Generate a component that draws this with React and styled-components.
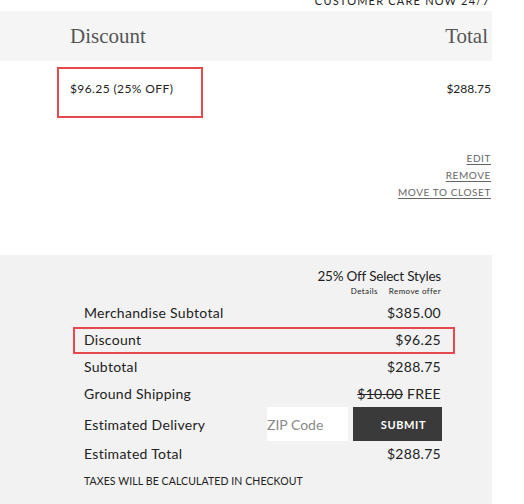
import React from "react";
import styled, { createGlobalStyle } from "styled-components";

const Global = createGlobalStyle`
  html, body { margin: 0; padding: 0; background: #fff; }
  body { font-family: Lato, "Liberation Sans", sans-serif; color: #222; overflow: hidden; }
  * { box-sizing: border-box; }
`;

const Page = styled.div`
  width: 492px;
`;

const TopBar = styled.div`
  height: 11px;
  display: flex;
  justify-content: flex-end;
  padding-right: 2px;
`;

const CareText = styled.span`
  font-size: 11px;
  line-height: 11px;
  letter-spacing: 1.2px;
  color: #222;
  margin-top: -5px;
`;

const HeaderBand = styled.div`
  height: 50px;
  background: #f5f5f5;
  display: flex;
  align-items: center;
  justify-content: space-between;
  padding: 0 4px 0 70px;
`;

const HeadCell = styled.span`
  font-family: "Liberation Serif", "DejaVu Serif", serif;
  font-size: 21px;
  color: #555;
`;

const ItemRow = styled.div`
  display: flex;
  justify-content: space-between;
  align-items: flex-start;
  padding: 6px 1px 0 57px;
`;

const Highlight = styled.div`
  border: 2px solid #e5484d;
`;

const DiscountBox = styled(Highlight)`
  width: 146px;
  height: 51px;
  padding: 12px 0 0 11px;
  font-size: 12px;
  line-height: 16px;
  letter-spacing: 0.4px;
`;

const ItemPrice = styled.span`
  margin-top: 14px;
  font-size: 12px;
  line-height: 16px;
`;

const Actions = styled.div`
  display: flex;
  flex-direction: column;
  align-items: flex-end;
  padding: 32px 1px 0 0;
  height: 137px;
`;

const ActionLink = styled.a`
  font-size: 10px;
  line-height: 17px;
  letter-spacing: 0.6px;
  color: #666;
  text-decoration: underline;
  text-underline-offset: 2px;
`;

const Panel = styled.div`
  background: #f2f2f2;
  padding: 13px 0 40px 73px;
`;

const Summary = styled.div`
  width: 382px;
`;

const Offer = styled.div`
  display: flex;
  flex-direction: column;
  align-items: flex-end;
  padding-right: 14px;
  margin-bottom: 3px;
`;

const OfferTitle = styled.div`
  font-size: 13.5px;
  line-height: 16px;
  letter-spacing: -0.2px;
`;

const OfferLinks = styled.div`
  display: flex;
  gap: 11px;
  font-size: 8px;
  line-height: 12px;
  letter-spacing: 0.4px;
  margin-top: 1px;
`;

const Row = styled.div`
  display: flex;
  justify-content: space-between;
  align-items: center;
  height: ${(p) => p.$h || 27}px;
  padding: 0 12px ${(p) => (p.$h ? 0 : 3)}px 9px;
  border: 2px solid ${(p) => (p.$hl ? "#e5484d" : "transparent")};
  margin-top: ${(p) => p.$mt || 0}px;
  font-size: 14px;
  letter-spacing: 0.3px;
`;

const Strike = styled.span`
  text-decoration: line-through;
  margin-right: 4px;
`;

const ZipGroup = styled.div`
  display: flex;
  gap: 5px;
  margin-right: -1px;
`;

const ZipInput = styled.input`
  width: 81px;
  height: 34px;
  border: none;
  outline: none;
  background: #fff;
  padding: 0;
  font-family: Lato, "Liberation Sans", sans-serif;
  font-size: 14px;
  color: #222;
  &::placeholder { color: #8a8a8a; }
`;

const SubmitButton = styled.button`
  width: 89px;
  height: 34px;
  border: none;
  background: #3a3a3a;
  color: #fff;
  font-family: Lato, "Liberation Sans", sans-serif;
  font-weight: 700;
  font-size: 11px;
  letter-spacing: 0.6px;
  padding: 0 0 0 12px;
`;

const Taxes = styled.div`
  padding-left: 11px;
  font-size: 10.5px;
  line-height: 14px;
  letter-spacing: 0.1px;
  margin-top: 6px;
`;

export default function App() {
  return (
    <Page>
      <Global />
      <TopBar>
        <CareText>CUSTOMER CARE NOW 24/7</CareText>
      </TopBar>
      <HeaderBand>
        <HeadCell>Discount</HeadCell>
        <HeadCell>Total</HeadCell>
      </HeaderBand>
      <ItemRow>
        <DiscountBox>$96.25 (25% OFF)</DiscountBox>
        <ItemPrice>$288.75</ItemPrice>
      </ItemRow>
      <Actions>
        <ActionLink>EDIT</ActionLink>
        <ActionLink>REMOVE</ActionLink>
        <ActionLink>MOVE TO CLOSET</ActionLink>
      </Actions>
      <Panel>
        <Summary>
          <Offer>
            <OfferTitle>25% Off Select Styles</OfferTitle>
            <OfferLinks>
              <span>Details</span>
              <span>Remove offer</span>
            </OfferLinks>
          </Offer>
          <Row>
            <span>Merchandise Subtotal</span>
            <span>$385.00</span>
          </Row>
          <Row $hl>
            <span>Discount</span>
            <span>$96.25</span>
          </Row>
          <Row>
            <span>Subtotal</span>
            <span>$288.75</span>
          </Row>
          <Row>
            <span>Ground Shipping</span>
            <span>
              <Strike>$10.00</Strike>FREE
            </span>
          </Row>
          <Row $h={34} $mt={-1}>
            <span>Estimated Delivery</span>
            <ZipGroup>
              <ZipInput placeholder="ZIP Code" />
              <SubmitButton>SUBMIT</SubmitButton>
            </ZipGroup>
          </Row>
          <Row>
            <span>Estimated Total</span>
            <span>$288.75</span>
          </Row>
          <Taxes>TAXES WILL BE CALCULATED IN CHECKOUT</Taxes>
        </Summary>
      </Panel>
    </Page>
  );
}
